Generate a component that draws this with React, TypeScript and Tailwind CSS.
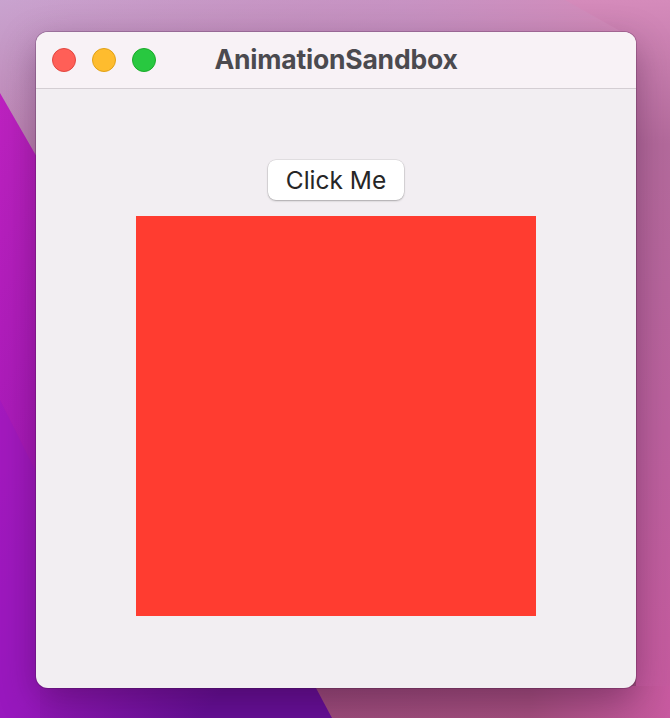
import React from "react";

function Wallpaper() {
  return (
    <svg className="absolute inset-0" width="670" height="718" viewBox="0 0 670 718">
      <defs>
        <linearGradient id="base" x1="0" y1="0" x2="0.3" y2="1">
          <stop offset="0" stopColor="#c9a3cf" />
          <stop offset="0.25" stopColor="#b97aaa" />
          <stop offset="0.6" stopColor="#b2619a" />
          <stop offset="1" stopColor="#9e4c7c" />
        </linearGradient>
        <linearGradient id="topr" x1="0" y1="0" x2="1" y2="0">
          <stop offset="0" stopColor="#cfa2d0" stopOpacity="0" />
          <stop offset="0.6" stopColor="#cd9acb" stopOpacity="0.6" />
          <stop offset="1" stopColor="#d78ab8" stopOpacity="1" />
        </linearGradient>
        <linearGradient id="rightEdge" x1="0" y1="0" x2="0" y2="1">
          <stop offset="0" stopColor="#d58bbb" />
          <stop offset="0.2" stopColor="#b46a9c" />
          <stop offset="0.6" stopColor="#bc619e" />
          <stop offset="1" stopColor="#c75a9f" />
        </linearGradient>
        <linearGradient id="botr" x1="0" y1="0" x2="1" y2="0">
          <stop offset="0" stopColor="#9c4c7a" />
          <stop offset="0.6" stopColor="#a44f7e" />
          <stop offset="1" stopColor="#c85aa0" />
        </linearGradient>
        <linearGradient id="mag" x1="0" y1="0" x2="0.6" y2="1">
          <stop offset="0" stopColor="#bd22c0" />
          <stop offset="0.45" stopColor="#a81ab8" />
          <stop offset="0.75" stopColor="#9418b8" />
          <stop offset="1" stopColor="#650f96" />
        </linearGradient>
      </defs>
      <rect width="670" height="718" fill="url(#base)" />
      <rect width="670" height="120" fill="url(#topr)" />
      <polygon points="565,0 670,0 670,718 636,718 636,40" fill="url(#rightEdge)" />
      <polygon points="318,686 670,686 670,718 332,718" fill="url(#botr)" />
      <polygon points="0,93 200,440 316,688 332,718 0,718" fill="url(#mag)" />
      <polygon points="0,400 40,480 40,718 0,718" fill="#9c18c4" opacity="0.5" />
    </svg>
  );
}

export default function App() {
  return (
    <div
      className="relative w-[670px] h-[718px] overflow-hidden pt-[32px] pl-[36px]"
      style={{ fontFamily: "Inter, 'Noto Sans', sans-serif" }}
    >
      <Wallpaper />
      <div className="relative w-[600px] h-[656px] flex flex-col rounded-[12px] overflow-hidden bg-[#f2eef2] shadow-[0_0_0_1px_rgba(60,20,60,0.25),0_12px_36px_rgba(40,0,40,0.35)]">
        <div className="h-[57px] shrink-0 grid grid-cols-[1fr_auto_1fr] items-center bg-[#f8f2f6] border-b border-[#d4ced3]">
          <div className="flex items-center gap-[16px] pl-[16px]">
            <span className="w-[24px] h-[24px] rounded-full bg-[#ff5f57] border border-[#e2463f]" />
            <span className="w-[24px] h-[24px] rounded-full bg-[#febc2e] border border-[#e1a116]" />
            <span className="w-[24px] h-[24px] rounded-full bg-[#28c840] border border-[#1aab29]" />
          </div>
          <div className="text-[26.5px] font-bold text-[#4b4a4f] leading-none tracking-[-0.2px] pb-[2px]">
            AnimationSandbox
          </div>
          <div />
        </div>
        <div className="flex flex-col items-center pt-[71px]">
          <button className="h-[40px] w-[136px] rounded-[8px] bg-white text-[24.5px] text-[#262626] leading-none shadow-[0_0_0_0.5px_rgba(0,0,0,0.12),0_1px_2px_rgba(0,0,0,0.25)]">
            Click Me
          </button>
          <div className="mt-[16px] w-[400px] h-[400px] bg-[#ff3c30]" />
        </div>
      </div>
    </div>
  );
}
